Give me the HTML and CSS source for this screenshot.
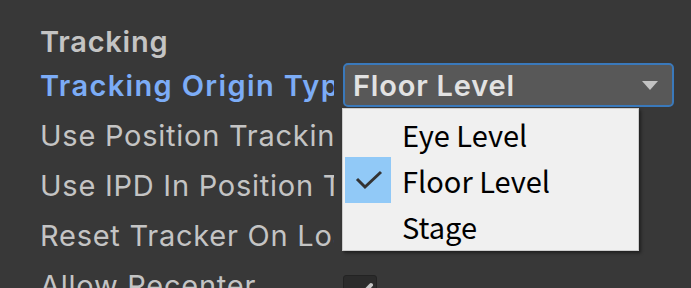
FILE: index.html
```html
<!DOCTYPE html>
<html>
<head>
<meta charset="utf-8">
<link rel="stylesheet" href="styles.css">
</head>
<body>
<div class="inspector">
  <div class="header">Tracking</div>
  <div class="row">
    <div class="label focused">Tracking Origin Type</div>
    <div class="dropdown">
      <span class="value">Floor Level</span>
      <svg class="arrow" width="16" height="9" viewBox="0 0 16 9"><polygon points="0,0 16,0 8,9" fill="#c2c2c2"/></svg>
    </div>
  </div>
  <div class="row"><div class="label">Use Position Tracking</div></div>
  <div class="row"><div class="label">Use IPD In Position Tracking</div></div>
  <div class="row"><div class="label">Reset Tracker On Load</div></div>
  <div class="row">
    <div class="label">Allow Recenter</div>
    <div class="checkbox">
      <svg width="32" height="32" viewBox="0 0 32 32"><polyline points="7,17 13,24 27,9" fill="none" stroke="#c4c4c4" stroke-width="4" stroke-linecap="round" stroke-linejoin="round"/></svg>
    </div>
  </div>
</div>
<div class="menu">
  <div class="item"><span class="icon"></span><span class="text">Eye Level</span></div>
  <div class="item"><span class="icon checked"><svg width="46" height="46" viewBox="0 0 46 46"><polyline points="12,22 20,30 36,15" fill="none" stroke="#333" stroke-width="3"/></svg></span><span class="text">Floor Level</span></div>
  <div class="item"><span class="icon"></span><span class="text">Stage</span></div>
</div>
</body>
</html>
```
FILE: styles.css
```css
html, body {
  margin: 0;
  padding: 0;
  background: #383838;
  overflow: hidden;
}
body {
  width: 691px;
  height: 288px;
  position: relative;
  font-family: Inter, "Noto Sans", sans-serif;
}
.inspector {
  padding-top: 22px;
}
.header {
  height: 38px;
  display: flex;
  align-items: center;
  padding-left: 40px;
  font-size: 29px;
  font-weight: 600;
  letter-spacing: 0.75px;
  color: #c4c4c4;
}
.row {
  height: 50px;
  display: flex;
  align-items: center;
  gap: 9px;
  padding: 0 17px 0 40px;
}
.label {
  flex: 0 0 294px;
  overflow: hidden;
  white-space: nowrap;
  font-size: 29px;
  letter-spacing: 0.75px;
  color: #c4c4c4;
}
.label.focused {
  color: #7cacf6;
  font-weight: 600;
  letter-spacing: 1.35px;
}
.dropdown {
  flex: 1;
  height: 40px;
  border: 2px solid #3a79bb;
  border-radius: 5px;
  background: #585858;
  display: flex;
  align-items: center;
  justify-content: space-between;
  padding: 0 14px 0 8px;
}
.value {
  font-size: 29px;
  font-weight: 600;
  letter-spacing: 0.8px;
  color: #e2e2e2;
}
.arrow {
  display: block;
}
.checkbox {
  width: 32px;
  height: 32px;
  border: 1px solid #232323;
  border-radius: 3px;
  background: #2b2b2b;
  margin-top: 15px;
  align-self: flex-start;
}
.checkbox svg {
  display: block;
}
.menu {
  position: absolute;
  left: 342px;
  top: 108px;
  width: 291px;
  padding: 2px 2px 1px 2px;
  background: #f0f0f0;
  border: 1px solid #cccccc;
  box-shadow: 2px 2px 3px rgba(0, 0, 0, 0.45);
  font-family: "Noto Sans CJK KR", "Noto Sans", sans-serif;
}
.item {
  height: 46px;
  display: flex;
  align-items: center;
}
.icon {
  flex: 0 0 46px;
  height: 46px;
}
.icon.checked {
  background: #91c9f7;
}
.icon svg {
  display: block;
}
.text {
  margin-left: 11px;
  font-size: 29px;
  color: #000;
}
```
